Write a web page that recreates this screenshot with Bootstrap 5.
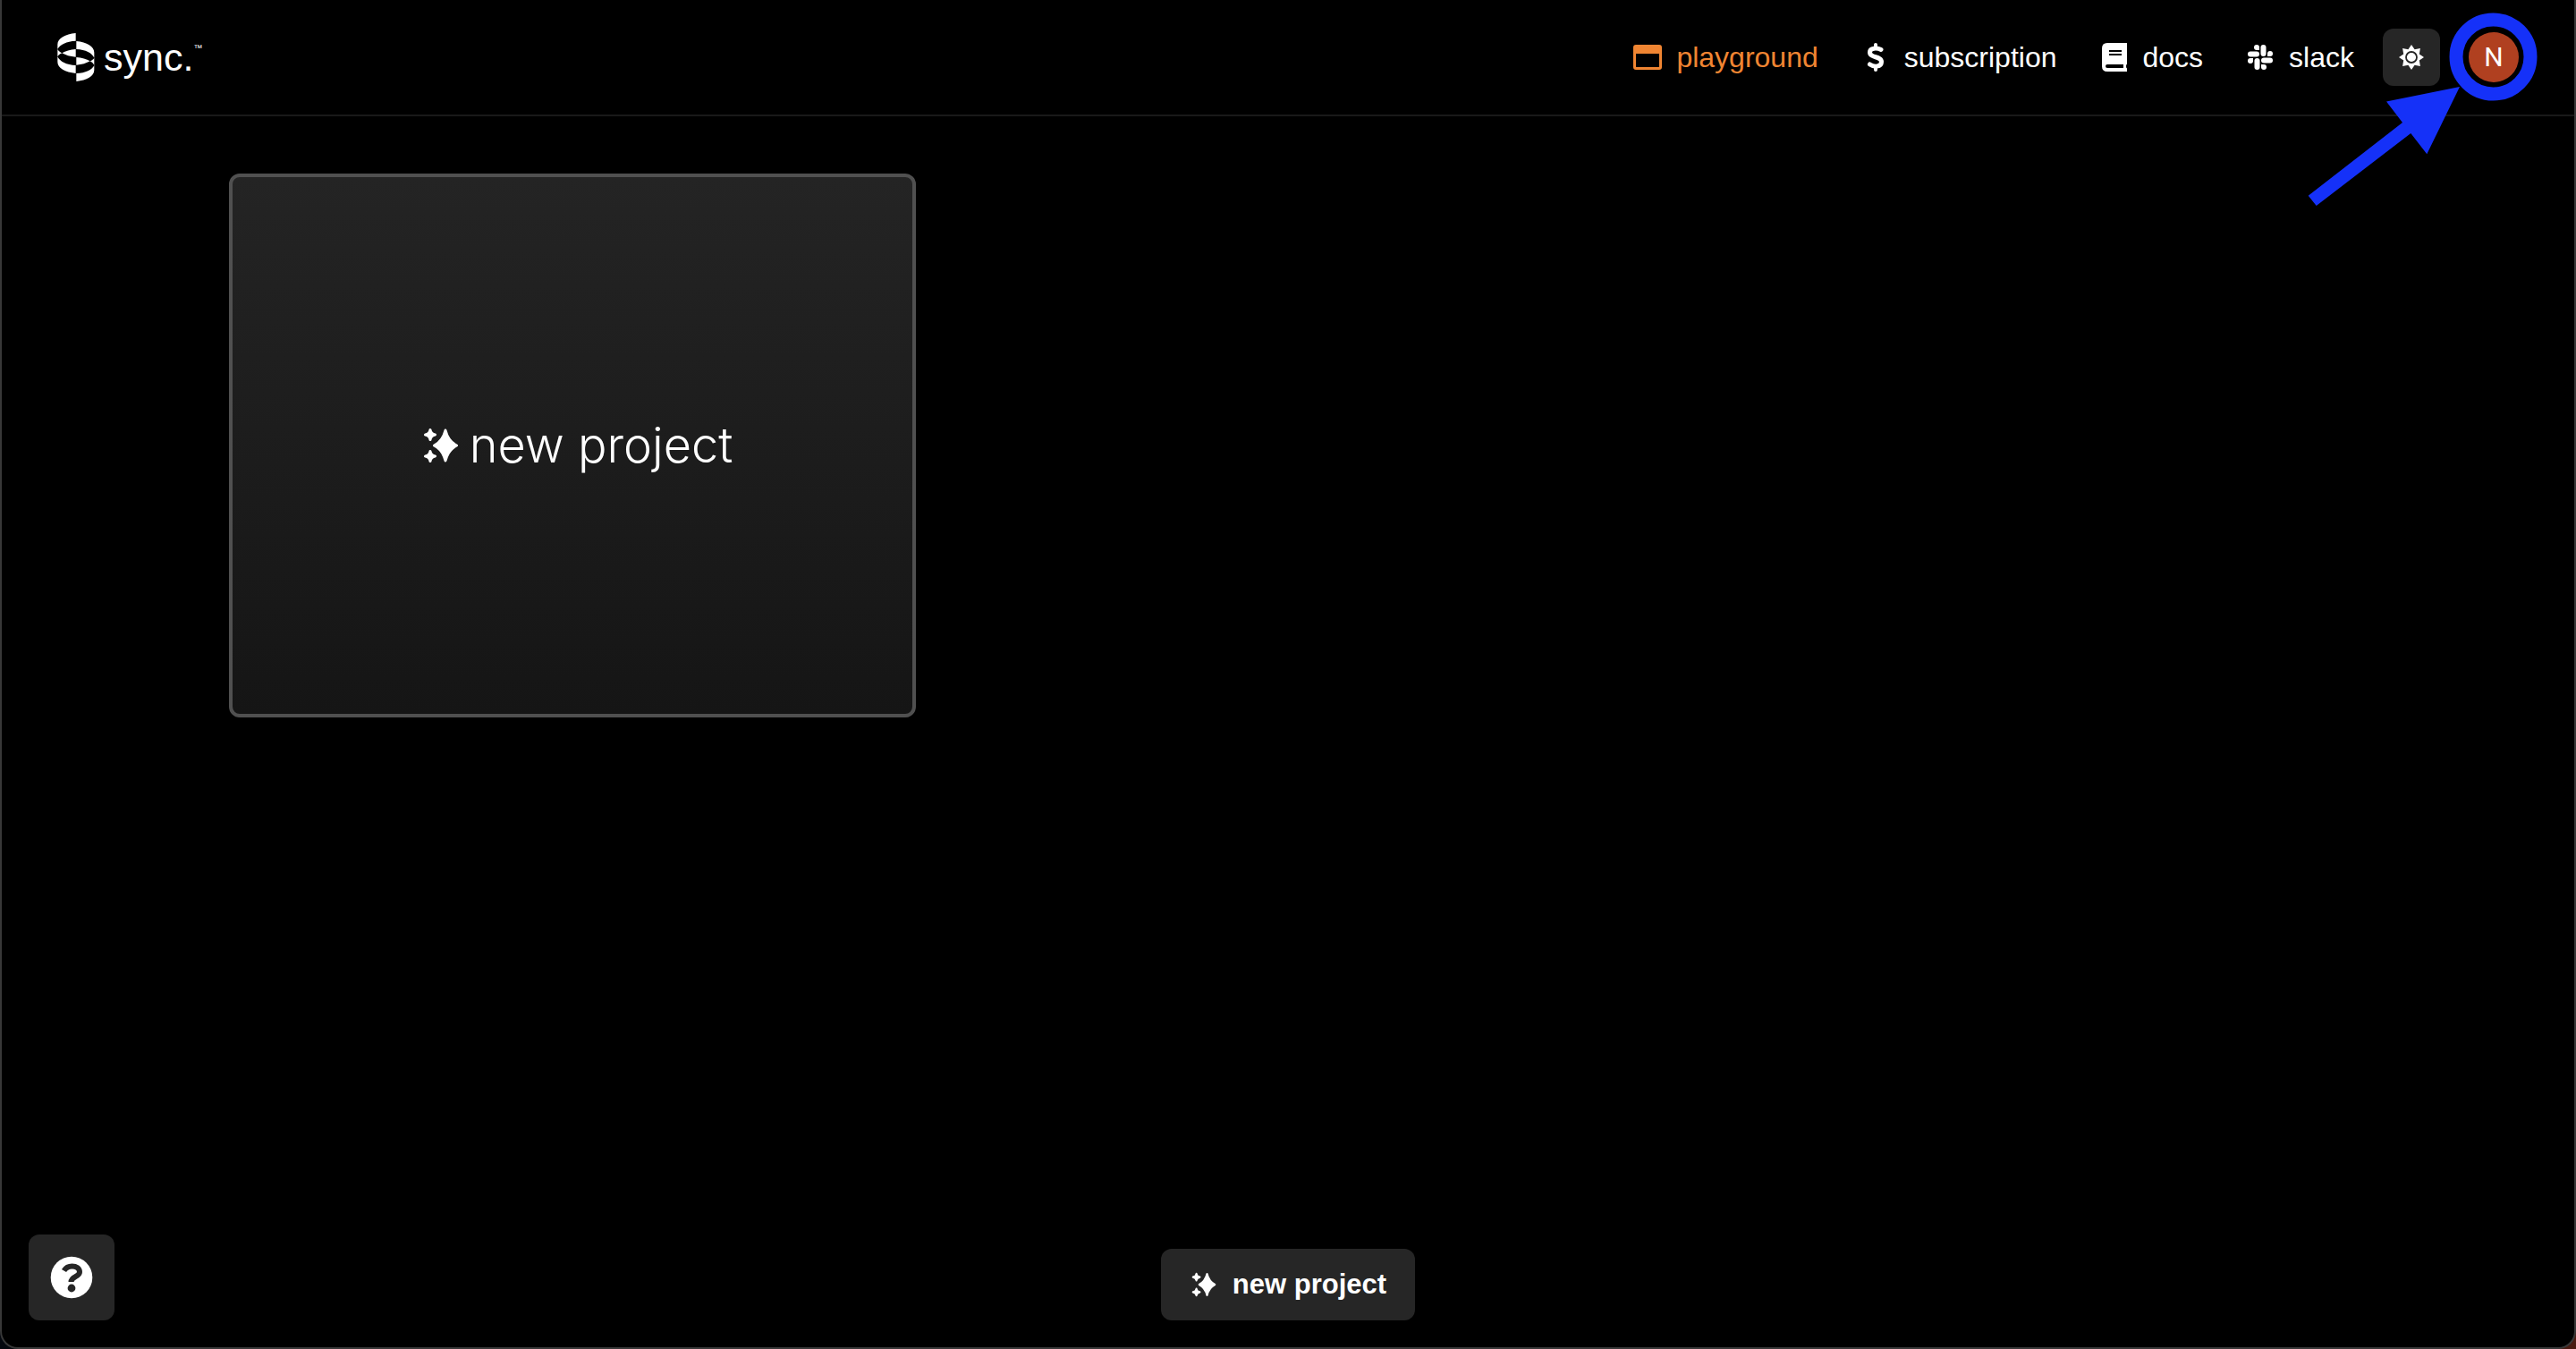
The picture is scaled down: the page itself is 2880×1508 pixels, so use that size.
<!DOCTYPE html>
<html lang="en" data-bs-theme="dark">
<head>
<meta charset="utf-8">
<meta name="viewport" content="width=device-width, initial-scale=1">
<title>sync. playground</title>
<link href="https://cdn.jsdelivr.net/npm/bootstrap@5.3.0/dist/css/bootstrap.min.css" rel="stylesheet">
<style>
  html { background: linear-gradient(90deg, #05080f 50%, #4a1a10 50%); }
  body { background: transparent; color: #fff; font-family: "Liberation Sans", Arial, sans-serif; font-size: 32px; line-height: 40px; }
  .app-frame { background: #000; border: 2px solid #383838; border-top: 0; border-radius: 0 0 20px 20px; }
  .top-bar { height: 130px; padding: 0 62px; border-bottom: 2px solid #191919; --bs-navbar-padding-y: 0; }
  .brand-link { gap: 10px; color: #fff; }
  .brand-name { font-size: 43px; line-height: 56px; }
  .brand-tm { font-size: 10px; line-height: 12px; margin-top: 12px; }
  .main-nav { gap: 48px; margin-right: 32px; }
  .main-nav .nav-link { gap: 16px; color: #fff; }
  .main-nav .nav-link.active { color: #f08532; }
  .tile-btn { background: #262626; border: 0; border-radius: 12px; color: #fff; }
  .theme-btn { width: 64px; height: 64px; margin-right: 32px; }
  .help-btn { width: 96px; height: 96px; }
  .avatar-btn { width: 56px; height: 56px; border: 0; background: #b04020; color: #fff; font: 30px/56px Roboto, sans-serif; }
  .callout { top: 0; right: -2px; pointer-events: none; z-index: 5; }
  .projects { max-width: 2400px; padding: 64px 16px; }
  .projects .row { --bs-gutter-x: 32px; }
  .project-card { height: 608px; gap: 12px; padding: 0 0 0 12px; border: 4px solid #505050; border-radius: 12px; background: linear-gradient(#242424, #151515); color: #fff; font: 300 54px/64px Inter, sans-serif; }
  .action-bar { display: grid; grid-template-columns: 1fr auto 1fr; padding: 0 30px 30px; }
  .new-btn { height: 80px; padding: 0 32px; gap: 16px; font-weight: 700; font-size: 31px; }
</style>
</head>
<body>
<svg class="d-none" aria-hidden="true">
  <symbol id="sparkles" viewBox="0 0 40 40">
    <g fill="currentColor" stroke="currentColor" stroke-width="3" stroke-linejoin="round">
      <path d="M25 3Q28 15 37.500 20Q28 25 25 37Q22 25 12.500 20Q22 15 25 3Z"/>
      <path d="M8 2.500Q8.500 7 13.500 8Q8.500 9 8 13.500Q7.500 9 2.500 8Q7.500 7 8 2.500Z"/>
      <path d="M8 26.500Q8.500 31 13.500 32Q8.500 33 8 37.500Q7.500 33 2.500 32Q7.500 31 8 26.500Z"/>
    </g>
  </symbol>
</svg>
<div class="app-frame position-relative d-flex flex-column min-vh-100">
  <header class="navbar navbar-expand top-bar flex-nowrap">
    <a class="brand-link d-flex align-items-center text-decoration-none" href="#" aria-label="sync.">
      <svg width="42" height="54" viewBox="0 0 124 162" fill="#fff" aria-hidden="true">
        <path d="M61 0C26 3 0 18 0 38V54C8 39 30 27 61 26Z"/>
        <path d="M0 54C4 60 8 64 15 67C8 70 3 74 0 79Z"/>
        <path d="M15 67C27 60 42 55 61 54V80C42 79 27 74 15 67Z"/>
        <path d="M0 79C8 96 30 107 61 108V135C26 132 0 117 0 97Z"/>
        <path d="M63 27C98 30 123 45 123 65V83C116 67 94 55 63 54Z"/>
        <path d="M63 81C82 82 97 87 109 94C97 101 82 106 63 107Z"/>
        <path d="M123 83V108C120 102 116 98 109 94C116 91 120 88 123 83Z"/>
        <path d="M63 135C94 134 116 123 123 108V124C123 144 98 159 63 162Z"/>
      </svg>
      <span class="d-flex align-items-start"><span class="brand-name">sync.</span><span class="brand-tm">™</span></span>
    </a>
    <nav class="ms-auto" aria-label="Main">
      <ul class="navbar-nav main-nav">
        <li class="nav-item"><a class="nav-link active d-flex align-items-center p-0" aria-current="page" href="#">
          <svg width="32" height="32" viewBox="0 0 32 32" aria-hidden="true"><path fill="currentColor" fill-rule="evenodd" d="M3 2H29Q32 2 32 5V27Q32 30 29 30H3Q0 30 0 27V5Q0 2 3 2ZM3 12V27H29V12Z"/></svg>playground</a></li>
        <li class="nav-item"><a class="nav-link d-flex align-items-center p-0" href="#">
          <svg width="32" height="32" viewBox="0 0 32 32" fill="none" stroke="currentColor" stroke-linecap="round" aria-hidden="true"><path stroke-width="4" d="M16 2V6M16 26V30"/><path stroke-width="5" d="M22 7.500C18 5.500 9.500 5 9.500 10.500C9.500 17 22.500 14.500 22.500 21C22.500 27.500 14 27 9.500 24"/></svg>subscription</a></li>
        <li class="nav-item"><a class="nav-link d-flex align-items-center p-0" href="#">
          <svg width="32" height="32" viewBox="0 0 32 32" aria-hidden="true"><path fill="currentColor" fill-rule="evenodd" d="M8 0H30V23.500Q29 24 29 26Q29 28 30 28.500V32H8Q2 32 2 26V6Q2 0 8 0ZM10 8V10H24V8ZM10 12V14H24V12ZM8 24Q6 24 6 26Q6 28 8 28H26V24Z"/></svg>docs</a></li>
        <li class="nav-item"><a class="nav-link d-flex align-items-center p-0" href="#">
          <svg width="32" height="32" viewBox="0 0 32 32" fill="currentColor" aria-hidden="true">
            <g id="petal"><rect x="2" y="9.500" width="13" height="6" rx="3"/><path d="M15 8H12A3 3 0 1 1 15 5Z"/></g>
            <use href="#petal" transform="rotate(90 16 16)"/><use href="#petal" transform="rotate(180 16 16)"/><use href="#petal" transform="rotate(270 16 16)"/>
          </svg>slack</a></li>
      </ul>
    </nav>
    <button class="tile-btn theme-btn d-flex align-items-center justify-content-center p-0" type="button" aria-label="Toggle theme">
      <svg width="28" height="28" viewBox="-14 -14 28 28" aria-hidden="true">
        <path fill="currentColor" d="M0-14L3.600-8.800L9.900-9.900L8.800-3.600L14 0L8.800 3.600L9.900 9.900L3.600 8.800L0 14L-3.600 8.800L-9.900 9.900L-8.800 3.600L-14 0L-8.800-3.600L-9.900-9.900L-3.600-8.800Z"/>
        <circle r="6" fill="currentColor" stroke="#262626" stroke-width="1.800"/>
      </svg>
    </button>
    <button class="avatar-btn rounded-circle p-0 text-center" type="button" aria-label="Account">N</button>
  </header>

  <svg class="callout position-absolute" width="320" height="250" viewBox="0 0 320 250" fill="#1531f8" aria-hidden="true">
    <circle cx="227.500" cy="63.500" r="41.500" fill="none" stroke="#1531f8" stroke-width="15"/>
    <path d="M190 97L108 113.500L126 137L20.700 218.700L29.700 230L135.300 149L153.300 172.300Z"/>
  </svg>

  <main class="flex-grow-1">
    <div class="container-fluid projects">
      <div class="row">
        <div class="col-4">
          <button class="project-card w-100 d-flex align-items-center justify-content-center" type="button">
            <svg width="40" height="40" aria-hidden="true"><use href="#sparkles"/></svg>new project
          </button>
        </div>
      </div>
    </div>
  </main>

  <footer class="action-bar align-items-end">
    <button class="tile-btn help-btn d-flex align-items-center justify-content-center p-0" type="button" aria-label="Help">
      <svg width="48" height="48" viewBox="0 0 48 48" aria-hidden="true">
        <circle cx="24" cy="24" r="23.300" fill="currentColor"/>
        <path fill="none" stroke="#262626" stroke-width="6" d="M15.500 16.500C18 12.500 21 11.500 24.500 11.500C29.500 11.500 33 14 33 18C33 23.500 23.500 23 23.500 29"/>
        <circle cx="24" cy="36" r="4.400" fill="#262626"/>
      </svg>
    </button>
    <button class="tile-btn new-btn d-flex align-items-center" type="button">
      <svg width="32" height="28" viewBox="0 0 32 28" aria-hidden="true"><use href="#sparkles" x="2" width="28" height="28"/></svg>new project
    </button>
  </footer>
</div>
<script src="https://cdn.jsdelivr.net/npm/bootstrap@5.3.0/dist/js/bootstrap.bundle.min.js"></script>
</body>
</html>
